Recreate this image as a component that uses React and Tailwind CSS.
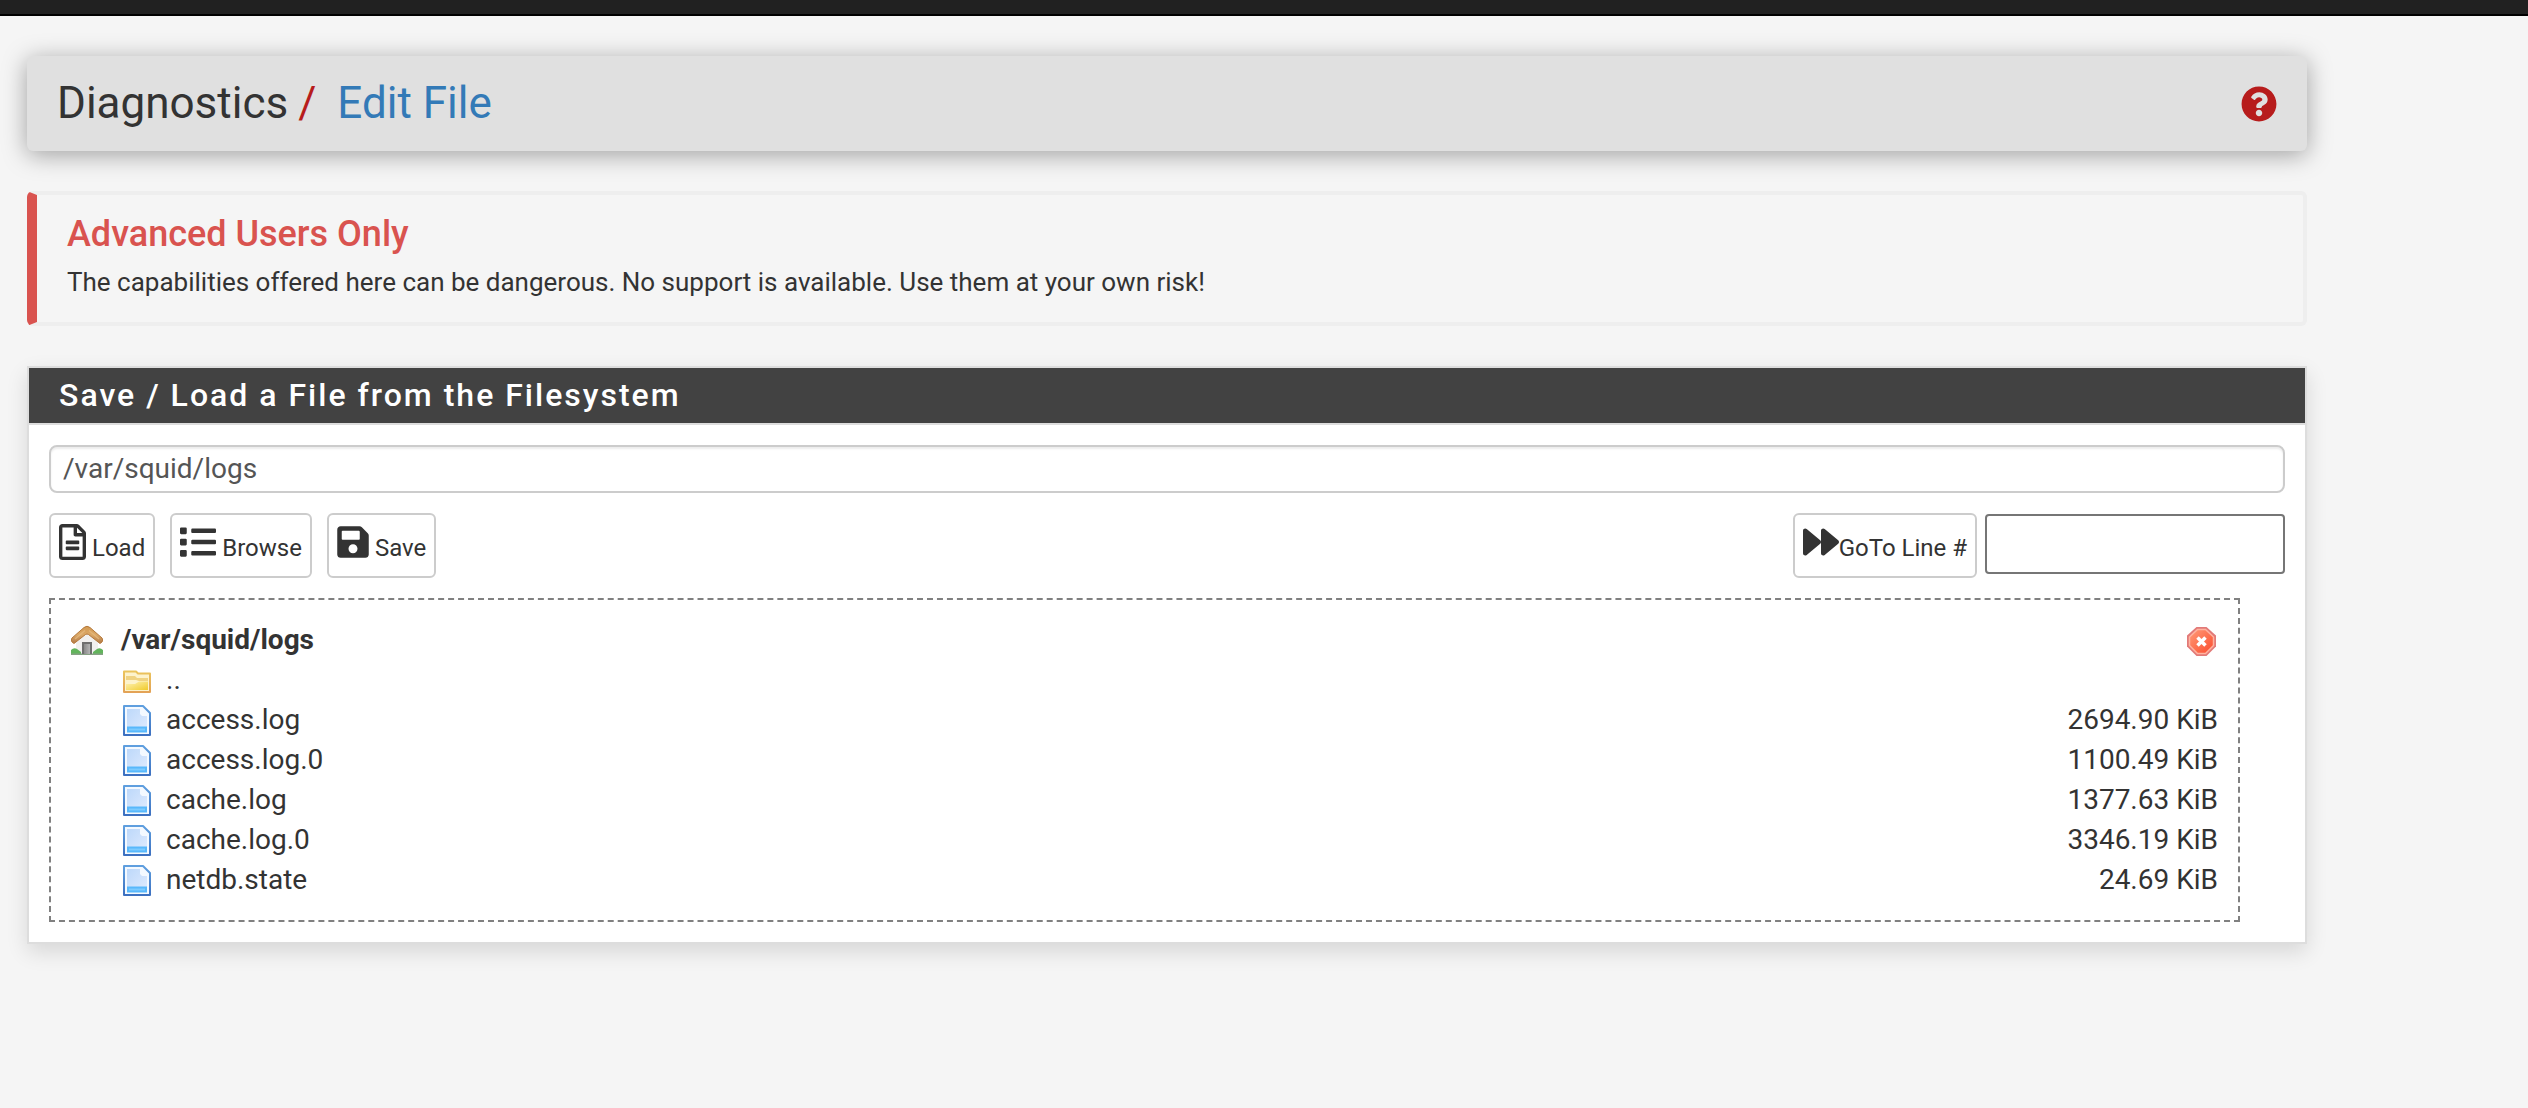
import React from "react";
import { FaQuestionCircle, FaRegFileAlt, FaList, FaSave, FaForward } from "react-icons/fa";

const files = [
  ["access.log", "2694.90 KiB"],
  ["access.log.0", "1100.49 KiB"],
  ["cache.log", "1377.63 KiB"],
  ["cache.log.0", "3346.19 KiB"],
  ["netdb.state", "24.69 KiB"],
];

function HouseIcon() {
  return (
    <svg viewBox="0 0 32 32" className="h-8 w-8" aria-hidden="true">
      <defs>
        <linearGradient id="roof" x1="0" y1="0" x2="0" y2="1">
          <stop offset="0" stopColor="#d39a52" />
          <stop offset=".5" stopColor="#dba867" />
          <stop offset="1" stopColor="#b27a48" />
        </linearGradient>
        <linearGradient id="door" x1="0" y1="0" x2="1" y2="0">
          <stop offset="0" stopColor="#8a8a8a" />
          <stop offset="1" stopColor="#b5b5b5" />
        </linearGradient>
      </defs>
      <path d="M5 16 16 8l11 8v14H5z" fill="#f1f0ef" />
      <path d="M0 26q3-3 6-1l4 3v3H0zM32 26q-3-3-6-1l-4 3v3h10z" fill="#62b45c" />
      <path d="M0 29.500h32V31H0z" fill="#86a184" />
      <path d="M11 18h10v12H11z" fill="#6f6f6f" />
      <path d="M13 20h6v10h-6z" fill="url(#door)" />
      <path
        d="M13 3.500q3-2.500 6 0L31 14q1.500 2 0 4l-2 1.500L17.500 10.500q-1.500-1-3 0L3 19.500 1 18q-1.500-2 0-4z"
        fill="url(#roof)"
        stroke="#b5793c"
        strokeWidth="1"
      />
      <path d="m4 15 10-8.500M28 15 18 6.500" stroke="#e8bd83" strokeWidth="1.500" opacity=".7" />
    </svg>
  );
}

function FolderIcon() {
  return (
    <svg viewBox="0 0 32 32" className="h-8 w-8" aria-hidden="true">
      <defs>
        <linearGradient id="fold" x1="0" y1="0" x2="1" y2="1">
          <stop offset="0" stopColor="#fff3b8" />
          <stop offset="1" stopColor="#f0cb2b" />
        </linearGradient>
        <linearGradient id="foldEdge" x1="0" y1="0" x2="0" y2="1">
          <stop offset="0" stopColor="#ebc45c" />
          <stop offset="1" stopColor="#e3a256" />
        </linearGradient>
      </defs>
      <path d="M3 7.500h12l2 2h12V28H3z" fill="#fdf3cc" stroke="url(#foldEdge)" strokeWidth="2" strokeLinejoin="round" />
      <path d="M5 12h9l2 2h11v3h-9l-3-1H5z" fill="#f0d382" />
      <path d="M5 20h9l4-2.500h9V26H5z" fill="url(#fold)" />
    </svg>
  );
}

function FileIcon() {
  return (
    <svg viewBox="0 0 32 32" className="h-8 w-8" aria-hidden="true">
      <defs>
        <linearGradient id="edge" x1="0" y1="0" x2="0" y2="1">
          <stop offset="0" stopColor="#5f9fdf" />
          <stop offset="1" stopColor="#3c70c0" />
        </linearGradient>
        <linearGradient id="page" x1="0" y1="0" x2="1" y2="1">
          <stop offset="0" stopColor="#bdd8fa" />
          <stop offset="1" stopColor="#dfebfe" />
        </linearGradient>
      </defs>
      <path d="M3 2h19l7 7v22H3z" fill="#f4f9ff" stroke="url(#edge)" strokeWidth="2" strokeLinejoin="round" />
      <path d="M6 5h13v5l2 2h5v16H6z" fill="url(#page)" />
      <path d="M6 22.500h20v6H6z" fill="#58b8fb" />
      <path d="M8 25.500h16" stroke="#7ccbff" strokeWidth="2" />
    </svg>
  );
}

function CloseIcon() {
  return (
    <svg viewBox="0 0 32 32" className="h-8 w-8" aria-hidden="true">
      <defs>
        <linearGradient id="stop" x1="0" y1="0" x2="1" y2="1">
          <stop offset="0" stopColor="#ff9c78" />
          <stop offset="1" stopColor="#fb4a2c" />
        </linearGradient>
      </defs>
      <path d="M10.500 3h10L30 11.500v11L20.500 32h-10L1 22.500v-11z" fill="#e27a78" />
      <path d="M11.500 5.500h8l8 7.500v8.500l-8 8h-8l-8-8V13z" fill="url(#stop)" stroke="#ffb3a0" strokeWidth="1.500" />
      <path d="m11.500 13.500 8 8m0-8-8 8" stroke="#fff" strokeWidth="3.500" />
    </svg>
  );
}

const buttonClass =
  "flex h-[65px] items-center rounded-md border-2 border-[#ccc] bg-white px-2 text-2xl";

export default function App() {
  return (
    <div className="min-h-screen bg-[#f5f5f5] pb-16 font-['Roboto',sans-serif] text-[#333]">
      <div className="h-4 border-b-2 border-black bg-[#212121]" />
      <main className="ml-[27px] mr-[221px] mt-10">
        <header className="flex h-[95px] items-center justify-between rounded-md bg-[#e0e0e0] pl-[30px] pr-[30px] shadow-[0_4px_24px_rgba(0,0,0,0.35)]">
          <h1 className="flex pb-0.5 text-[44px] leading-none">
            Diagnostics
            <span className="ml-2.5 text-[#b71c1c]">/</span>
            <a href="#edit" className="ml-[21px] text-[#337ab7]">Edit File</a>
          </h1>
          <a href="#help" aria-label="Help" className="text-[#b71c1c]">
            <FaQuestionCircle className="size-9" />
          </a>
        </header>

        <section className="mt-10 rounded-md border-4 border-l-[10px] border-[#eee] border-l-[#d9534f] pb-[22px] pl-[30px] pt-[19px]">
          <h2 className="text-4xl font-medium leading-10 text-[#d9534f]">Advanced Users Only</h2>
          <p className="mt-2.5 text-[26px] leading-9">
            The capabilities offered here can be dangerous. No support is available. Use them at your own risk!
          </p>
        </section>

        <section className="mt-10 border-2 border-[#ddd] bg-white shadow-[0_8px_20px_rgba(0,0,0,0.12)]">
          <h2 className="h-[57px] border-b-2 border-[#ddd] bg-[#424242] pl-[30px] text-[32px] font-medium leading-[54px] tracking-[2px] text-white">
            Save / Load a File from the Filesystem
          </h2>
          <div className="p-5">
            <input
              aria-label="File path"
              defaultValue="/var/squid/logs"
              className="block h-12 w-full rounded-lg border-2 border-[#ccc] bg-white px-3 pb-0.5 text-[28px] text-[#555] shadow-[inset_0_2px_2px_rgba(0,0,0,0.075)]"
            />
            <div className="mt-5 flex items-start justify-between">
              <div className="flex gap-[15px]">
                <button className={buttonClass}>
                  <FaRegFileAlt className="mb-2 mr-1.5 h-9 w-[27px]" />
                  <span className="mt-1">Load</span>
                </button>
                <button className={buttonClass}>
                  <FaList className="mb-2 mr-1.5 size-9" />
                  <span className="mt-1">Browse</span>
                </button>
                <button className={buttonClass}>
                  <FaSave className="mb-2 mr-1.5 h-9 w-8" />
                  <span className="mt-1">Save</span>
                </button>
              </div>
              <div className="flex items-start gap-2">
                <button className={buttonClass}>
                  <FaForward className="mb-2 size-9" />
                  <span className="mt-1">GoTo Line #</span>
                </button>
                <input aria-label="Line number" className="mt-px h-[60px] w-[300px] rounded border-2 border-[#767676] px-2 text-2xl" />
              </div>
            </div>
            <div className="mr-[45px] mt-5 border-2 border-dashed border-[#808080] p-5">
              <table className="w-full text-[28px] leading-10">
                <thead>
                  <tr>
                    <th className="w-[50px]"><HouseIcon /></th>
                    <th colSpan={2} className="text-left font-bold">/var/squid/logs</th>
                    <th><button aria-label="Close" className="ml-auto block"><CloseIcon /></button></th>
                  </tr>
                </thead>
                <tbody>
                  <tr><td /><td className="w-[45px]"><FolderIcon /></td><td>..</td><td /></tr>
                  {files.map(([name, size]) => (
                    <tr key={name}>
                      <td />
                      <td><FileIcon /></td>
                      <td>{name}</td>
                      <td className="text-right">{size}</td>
                    </tr>
                  ))}
                </tbody>
              </table>
            </div>
          </div>
        </section>
      </main>
    </div>
  );
}
